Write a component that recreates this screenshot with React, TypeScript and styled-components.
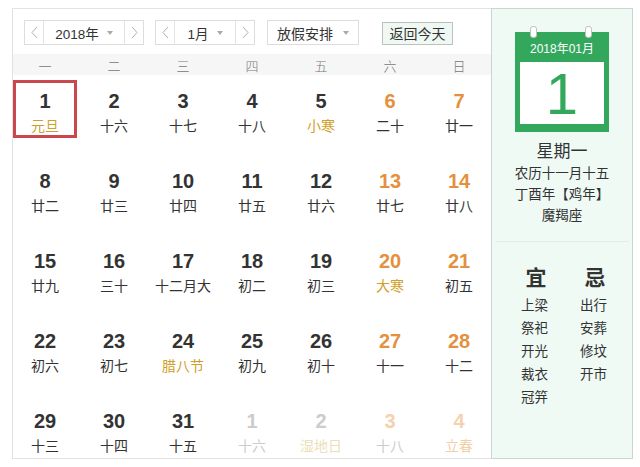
import React from 'react';
import styled, { createGlobalStyle } from 'styled-components';

const GlobalStyle = createGlobalStyle`
    html, body {
        margin: 0;
        padding: 0;
        background: #ffffff;
    }
    body {
        font-family: "Liberation Sans", "Noto Sans CJK SC", sans-serif;
        color: #333333;
    }
`;

const Page = styled.div`
    display: flex;
    padding: 8px 0 0 12px;
`;

const Main = styled.div`
    width: 479px;
    height: 451px;
    box-sizing: border-box;
    border: 1px solid #e2e2e2;
    border-right: none;
    display: flex;
    flex-direction: column;
`;

const Toolbar = styled.div`
    display: flex;
    align-items: center;
    height: 25px;
    padding: 11px 0 0 11px;
`;

const SelectGroup = styled.div<{ $gap: number }>`
    display: flex;
    height: 25px;
    box-sizing: border-box;
    border: 1px solid #dddddd;
    margin-right: ${(p) => p.$gap}px;
    background: #ffffff;
`;

const ArrowCell = styled.div<{ $side: 'left' | 'right' }>`
    width: 18px;
    display: flex;
    align-items: center;
    justify-content: center;
    ${(p) => (p.$side === 'left' ? 'border-right: 1px solid #e4e4e4;' : 'border-left: 1px solid #e4e4e4;')}
`;

const LabelCell = styled.div<{ $width: number }>`
    width: ${(p) => p.$width}px;
    display: flex;
    align-items: center;
    justify-content: center;
    gap: 8px;
    font-size: 13.5px;
    color: #333;
`;

const Dropdown = styled.div`
    width: 92px;
    height: 25px;
    box-sizing: border-box;
    border: 1px solid #dddddd;
    display: flex;
    align-items: center;
    justify-content: center;
    gap: 10px;
    font-size: 14px;
    margin-right: 23px;
`;

const Caret = styled.span`
    width: 0;
    height: 0;
    border-left: 3.5px solid transparent;
    border-right: 3.5px solid transparent;
    border-top: 4px solid #aaaaaa;
`;

const TodayButton = styled.button`
    width: 71px;
    height: 23px;
    box-sizing: border-box;
    border: 1px solid #b9c2bd;
    background: #eff8f2;
    font-family: inherit;
    font-size: 14px;
    color: #333;
    padding: 0;
    margin-top: 1px;
`;

const WeekHeader = styled.div`
    margin-top: 9px;
    height: 26px;
    background: #f6f6f6;
    display: grid;
    grid-template-columns: repeat(7, 64px);
    column-gap: 5px;
    align-items: center;
`;

const WeekName = styled.div`
    text-align: center;
    font-size: 13px;
    color: #777;
    font-weight: 300;
    padding-top: 2px;
`;

const DayGrid = styled.div`
    display: grid;
    grid-template-columns: repeat(7, 64px);
    grid-auto-rows: 58px;
    column-gap: 5px;
    row-gap: 22px;
    padding-top: 5px;
`;

type Tone = 'normal' | 'weekend';

const DayCell = styled.div<{ $selected?: boolean }>`
    box-sizing: border-box;
    border: 3px solid ${(p) => (p.$selected ? '#c9474d' : 'transparent')};
    display: flex;
    flex-direction: column;
    align-items: center;
    padding-top: 6px;
`;

const numberColor = (tone: Tone, other: boolean) => {
    if (other) return tone === 'weekend' ? '#f4d2b0' : '#cccccc';
    return tone === 'weekend' ? '#e4913f' : '#333333';
};

const lunarColor = (fest: boolean, tone: Tone, other: boolean) => {
    if (other) {
        if (fest) return tone === 'weekend' ? '#f2cfa8' : '#ece0b8';
        return '#cccccc';
    }
    return fest ? '#cf9f2a' : '#333333';
};

const DayNum = styled.div<{ $tone: Tone; $other: boolean }>`
    font-size: 20px;
    font-weight: bold;
    line-height: 24px;
    color: ${(p) => numberColor(p.$tone, p.$other)};
`;

const Lunar = styled.div<{ $fest: boolean; $tone: Tone; $other: boolean }>`
    margin-top: 4px;
    font-size: 14px;
    line-height: 18px;
    color: ${(p) => lunarColor(p.$fest, p.$tone, p.$other)};
`;

const Side = styled.div`
    width: 142px;
    height: 451px;
    box-sizing: border-box;
    border: 1px solid #c7d9cf;
    background: #effaf5;
    display: flex;
    flex-direction: column;
    align-items: center;
`;

const CalIcon = styled.div`
    position: relative;
    margin-top: 23px;
    width: 94px;
    height: 100px;
    background: #33a85d;
    display: flex;
    flex-direction: column;
    align-items: center;
`;

const Ring = styled.span<{ $left: number }>`
    position: absolute;
    top: -6px;
    left: ${(p) => p.$left}px;
    width: 5px;
    height: 10px;
    border-radius: 3px;
    background: #ffffff;
    border: 1px solid #b8c4bd;
`;

const IconHead = styled.div`
    height: 30px;
    display: flex;
    align-items: center;
    color: #ffffff;
    font-size: 12px;
`;

const IconBody = styled.div`
    width: 84px;
    height: 62px;
    background: #ffffff;
    display: flex;
    align-items: center;
    justify-content: center;
    color: #33a85d;
    font-size: 58px;
    font-weight: 300;
    line-height: 1;
    padding-top: 2px;
    box-sizing: border-box;
`;

const Weekday = styled.div`
    margin-top: 9px;
    font-size: 17px;
    line-height: 22px;
    color: #333;
`;

const InfoLine = styled.div`
    font-size: 13.5px;
    line-height: 21px;
    color: #333;
    white-space: nowrap;
`;

const Divider = styled.div`
    margin-top: 15px;
    width: 134px;
    height: 1px;
    background: #e2efe8;
`;

const Almanac = styled.div`
    margin-top: 23px;
    display: flex;
    gap: 31px;
    padding-left: 4px;
`;

const AlmanacCol = styled.div`
    display: flex;
    flex-direction: column;
    align-items: center;
    width: 28px;
`;

const AlmanacHead = styled.div`
    font-size: 21px;
    line-height: 26px;
    font-weight: bold;
    color: #333;
    margin-bottom: 3px;
    padding-left: 3px;
`;

const AlmanacItem = styled.div`
    font-size: 13.5px;
    line-height: 23px;
    color: #333;
`;

const Chevron = ({ dir }: { dir: 'left' | 'right' }) => (
    <svg width="7" height="13" viewBox="0 0 7 13">
        <path
            d={dir === 'left' ? 'M6 1 L1 6.5 L6 12' : 'M1 1 L6 6.5 L1 12'}
            fill="none"
            stroke="#b0b0b0"
            strokeWidth="1"
        />
    </svg>
);

type Day = { d: number; lunar: string; fest?: boolean; weekend?: boolean; other?: boolean; selected?: boolean };

const days: Day[] = [
    { d: 1, lunar: '元旦', fest: true, selected: true },
    { d: 2, lunar: '十六' },
    { d: 3, lunar: '十七' },
    { d: 4, lunar: '十八' },
    { d: 5, lunar: '小寒', fest: true },
    { d: 6, lunar: '二十', weekend: true },
    { d: 7, lunar: '廿一', weekend: true },
    { d: 8, lunar: '廿二' },
    { d: 9, lunar: '廿三' },
    { d: 10, lunar: '廿四' },
    { d: 11, lunar: '廿五' },
    { d: 12, lunar: '廿六' },
    { d: 13, lunar: '廿七', weekend: true },
    { d: 14, lunar: '廿八', weekend: true },
    { d: 15, lunar: '廿九' },
    { d: 16, lunar: '三十' },
    { d: 17, lunar: '十二月大' },
    { d: 18, lunar: '初二' },
    { d: 19, lunar: '初三' },
    { d: 20, lunar: '大寒', fest: true, weekend: true },
    { d: 21, lunar: '初五', weekend: true },
    { d: 22, lunar: '初六' },
    { d: 23, lunar: '初七' },
    { d: 24, lunar: '腊八节', fest: true },
    { d: 25, lunar: '初九' },
    { d: 26, lunar: '初十' },
    { d: 27, lunar: '十一', weekend: true },
    { d: 28, lunar: '十二', weekend: true },
    { d: 29, lunar: '十三' },
    { d: 30, lunar: '十四' },
    { d: 31, lunar: '十五' },
    { d: 1, lunar: '十六', other: true },
    { d: 2, lunar: '湿地日', fest: true, other: true },
    { d: 3, lunar: '十八', weekend: true, other: true },
    { d: 4, lunar: '立春', fest: true, weekend: true, other: true },
];

const weekNames = ['一', '二', '三', '四', '五', '六', '日'];
const yi = ['上梁', '祭祀', '开光', '裁衣', '冠笄'];
const ji = ['出行', '安葬', '修坟', '开市'];

const App: React.FC = () => {
    return (
        <>
            <GlobalStyle />
            <Page>
                <Main>
                    <Toolbar>
                        <SelectGroup $gap={11}>
                            <ArrowCell $side="left"><Chevron dir="left" /></ArrowCell>
                            <LabelCell $width={80}>2018年<Caret /></LabelCell>
                            <ArrowCell $side="right"><Chevron dir="right" /></ArrowCell>
                        </SelectGroup>
                        <SelectGroup $gap={12}>
                            <ArrowCell $side="left"><Chevron dir="left" /></ArrowCell>
                            <LabelCell $width={60}>1月<Caret /></LabelCell>
                            <ArrowCell $side="right"><Chevron dir="right" /></ArrowCell>
                        </SelectGroup>
                        <Dropdown>放假安排<Caret /></Dropdown>
                        <TodayButton>返回今天</TodayButton>
                    </Toolbar>
                    <WeekHeader>
                        {weekNames.map((w) => (
                            <WeekName key={w}>{w}</WeekName>
                        ))}
                    </WeekHeader>
                    <DayGrid>
                        {days.map((day, i) => {
                            const tone: Tone = day.weekend ? 'weekend' : 'normal';
                            return (
                                <DayCell key={i} $selected={day.selected}>
                                    <DayNum $tone={tone} $other={!!day.other}>{day.d}</DayNum>
                                    <Lunar $fest={!!day.fest} $tone={tone} $other={!!day.other}>{day.lunar}</Lunar>
                                </DayCell>
                            );
                        })}
                    </DayGrid>
                </Main>
                <Side>
                    <CalIcon>
                        <Ring $left={15} />
                        <Ring $left={70} />
                        <IconHead>2018年01月</IconHead>
                        <IconBody>1</IconBody>
                    </CalIcon>
                    <Weekday>星期一</Weekday>
                    <InfoLine>农历十一月十五</InfoLine>
                    <InfoLine>丁酉年【鸡年】</InfoLine>
                    <InfoLine>魔羯座</InfoLine>
                    <Divider />
                    <Almanac>
                        <AlmanacCol>
                            <AlmanacHead>宜</AlmanacHead>
                            {yi.map((t) => (
                                <AlmanacItem key={t}>{t}</AlmanacItem>
                            ))}
                        </AlmanacCol>
                        <AlmanacCol>
                            <AlmanacHead>忌</AlmanacHead>
                            {ji.map((t) => (
                                <AlmanacItem key={t}>{t}</AlmanacItem>
                            ))}
                        </AlmanacCol>
                    </Almanac>
                </Side>
            </Page>
        </>
    );
};

export default App;
